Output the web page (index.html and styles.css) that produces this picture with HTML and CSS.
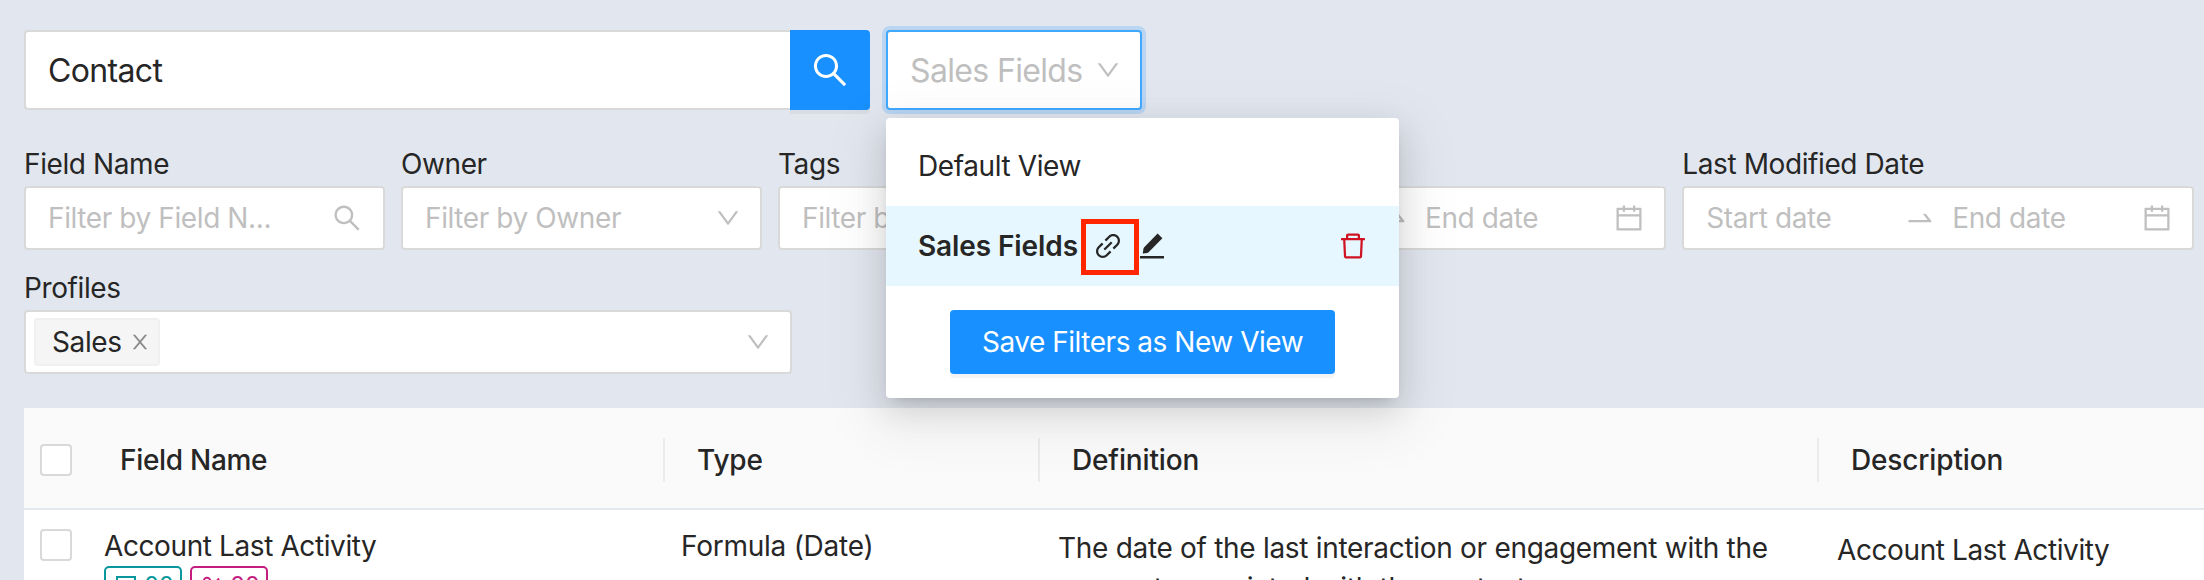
FILE: index.html
```
<!DOCTYPE html>
<html lang="en">
<head>
<meta charset="utf-8">
<title>Fields</title>
<link rel="stylesheet" href="styles.css">
</head>
<body>
<svg class="sprite" aria-hidden="true">
  <symbol id="search" viewBox="64 64 896 896"><path d="M909.6 854.5L649.9 594.8C690.2 542.7 712 479 712 412c0-80.200-31.300-155.400-87.900-212.100-56.600-56.700-132-87.900-212.100-87.900s-155.500 31.300-212.100 87.900C143.200 256.500 112 331.800 112 412c0 80.100 31.300 155.500 87.900 212.100C256.500 680.800 331.800 712 412 712c67 0 130.600-21.800 182.700-62l259.700 259.600a8.200 8.200 0 0 0 11.600 0l43.600-43.500a8.200 8.200 0 0 0 0-11.600zM570.400 570.400C528 612.700 471.800 636 412 636s-116-23.300-158.400-65.600C211.300 528 188 471.800 188 412s23.300-116.100 65.600-158.400C296 211.300 352.200 188 412 188s116.100 23.200 158.400 65.600S636 352.200 636 412s-23.300 116.100-65.600 158.400z"/></symbol>
  <symbol id="down" viewBox="64 64 896 896"><path d="M884 256h-75c-5.100 0-9.900 2.500-12.900 6.600L512 654.200 227.900 262.600c-3-4.100-7.800-6.600-12.900-6.600h-75c-6.500 0-10.300 7.400-6.500 12.700l352.600 486.100c12.800 17.600 39 17.600 51.700 0l352.600-486.100c3.900-5.300.1-12.700-6.400-12.700z"/></symbol>
  <symbol id="close" viewBox="64 64 896 896"><path d="M563.800 512l262.500-312.900c4.400-5.200.7-13.100-6.100-13.100h-79.800c-4.700 0-9.200 2.100-12.300 5.700L511.600 449.800 295.100 191.700c-3-3.600-7.500-5.700-12.300-5.700H203c-6.800 0-10.500 7.900-6.100 13.100L459.400 512 196.900 824.900A7.950 7.950 0 0 0 203 838h79.800c4.700 0 9.200-2.100 12.300-5.700l216.500-258.100 216.500 258.100c3 3.600 7.500 5.700 12.300 5.700h79.800c6.800 0 10.500-7.900 6.100-13.100L563.800 512z"/></symbol>
  <symbol id="calendar" viewBox="64 64 896 896"><path d="M880 184H712v-64c0-4.400-3.600-8-8-8h-56c-4.400 0-8 3.600-8 8v64H384v-64c0-4.400-3.600-8-8-8h-56c-4.400 0-8 3.600-8 8v64H144c-17.700 0-32 14.300-32 32v664c0 17.700 14.300 32 32 32h736c17.700 0 32-14.300 32-32V216c0-17.700-14.300-32-32-32zm-40 656H184V460h656v380zM184 392V256h128v48c0 4.400 3.600 8 8 8h56c4.400 0 8-3.600 8-8v-48h256v48c0 4.400 3.600 8 8 8h56c4.400 0 8-3.600 8-8v-48h128v136H184z"/></symbol>
  <symbol id="swap" viewBox="0 0 1024 1024"><path d="M873.1 596.2l-164-208A32 32 0 0 0 684 376h-64.800c-6.700 0-10.400 7.700-6.300 13l144.300 183H152c-4.400 0-8 3.600-8 8v60c0 4.400 3.600 8 8 8h695.900c26.800 0 41.700-30.800 25.200-51.800z"/></symbol>
  <symbol id="link" viewBox="64 64 896 896"><path d="M574 665.400a8.030 8.030 0 0 0-11.300 0L446.500 781.600c-53.800 53.800-144.600 59.500-204 0-59.500-59.500-53.800-150.200 0-204l116.200-116.200c3.100-3.100 3.100-8.200 0-11.300l-39.800-39.800a8.030 8.030 0 0 0-11.300 0L191.400 526.500c-84.600 84.600-84.600 221.500 0 306s221.500 84.600 306 0l116.200-116.200c3.100-3.100 3.100-8.200 0-11.300L574 665.400zm258.600-474c-84.600-84.600-221.500-84.600-306 0L410.300 307.600a8.030 8.030 0 0 0 0 11.300l39.700 39.700c3.100 3.100 8.200 3.100 11.300 0l116.200-116.200c53.800-53.800 144.600-59.500 204 0 59.500 59.500 53.800 150.200 0 204L665.300 562.600a8.030 8.030 0 0 0 0 11.300l39.800 39.800c3.100 3.100 8.200 3.100 11.300 0l116.200-116.200c84.500-84.600 84.500-221.500 0-306.100zM610.100 372.300a8.030 8.030 0 0 0-11.300 0L372.300 598.700a8.030 8.030 0 0 0 0 11.300l39.600 39.600c3.100 3.100 8.200 3.100 11.300 0l226.400-226.400c3.100-3.100 3.100-8.200 0-11.300l-39.500-39.600z"/></symbol>
  <symbol id="pen" viewBox="0 0 26 26"><path d="M18.600 .6L23.400 5.200 9.600 19.300Q8.900 20 8 20.100L4.300 20.600Q3.700 20.600 3.800 20L4.500 15.600Q4.600 14.900 5.200 14.300ZM1 23h24v2.400H1z"/></symbol>
  <symbol id="trash" viewBox="64 64 896 896"><path d="M360 184h-8c4.400 0 8-3.600 8-8v8h304v-8c0 4.400 3.600 8 8 8h-8v72h72v-80c0-35.300-28.700-64-64-64H352c-35.300 0-64 28.700-64 64v80h72v-72zm504 72H160c-17.700 0-32 14.300-32 32v32c0 4.400 3.600 8 8 8h60.400l24.700 523c1.600 34.100 29.800 61 63.900 61h454c34.200 0 62.300-26.800 63.900-61l24.700-523H888c4.400 0 8-3.600 8-8v-32c0-17.700-14.300-32-32-32zM731.300 840H292.700l-24.200-512h487l-24.200 512z"/></symbol>
</svg>

<main class="page">
  <div class="topbar">
    <div class="search">
      <div class="search-input"><span class="t-lg">Contact</span></div>
      <div class="search-btn"><svg class="ic36"><use href="#search"/></svg></div>
    </div>
    <div class="view-select">
      <span class="t-lg ph">Sales Fields</span><svg class="ic24"><use href="#down"/></svg>
      <div class="menu">
        <div class="item"><span>Default View</span></div>
        <div class="item active">
          <b class="item-name">Sales Fields</b>
          <span class="mark"><svg class="ic28"><use href="#link"/></svg></span>
          <svg class="ic26"><use href="#pen"/></svg>
          <svg class="ic28 trash"><use href="#trash"/></svg>
        </div>
        <div class="save"><span class="save-t">Save Filters as New View</span></div>
      </div>
    </div>
  </div>

  <div class="filters">
    <div class="field"><label>Field Name</label><div class="box find"><span class="ph">Filter by Field N...</span><svg class="ic28"><use href="#search"/></svg></div></div>
    <div class="field"><label>Owner</label><div class="box"><span class="ph">Filter by Owner</span><svg class="ic24"><use href="#down"/></svg></div></div>
    <div class="field"><label>Tags</label><div class="box"><span class="ph">Filter by Tags</span><svg class="ic24"><use href="#down"/></svg></div></div>
    <div class="field wide"><label>Created Date</label><div class="box range"><span class="ph">Start date</span><svg class="ic32 swap"><use href="#swap"/></svg><span class="ph">End date</span><svg class="ic28"><use href="#calendar"/></svg></div></div>
    <div class="field wide"><label>Last Modified Date</label><div class="box range"><span class="ph">Start date</span><svg class="ic32 swap"><use href="#swap"/></svg><span class="ph">End date</span><svg class="ic28"><use href="#calendar"/></svg></div></div>
  </div>

  <div class="profiles"><label>Profiles</label><div class="box multi"><span class="chip"><span>Sales</span><svg class="ic20"><use href="#close"/></svg></span><svg class="ic24"><use href="#down"/></svg></div></div>

  <div class="table">
    <div class="thead">
      <div class="c0"><i class="check"></i></div>
      <div class="c1">Field Name</div><div class="c2">Type</div><div class="c3">Definition</div><div class="c4">Description</div>
    </div>
    <div class="row">
      <div class="c0"><i class="check"></i></div>
      <div class="c1"><span>Account Last Activity</span>
        <div class="badges">
          <span class="badge teal"><svg class="bi" viewBox="0 0 20 20"><path d="M1 1h18v18H1zM5 6h2M13 6h2M5 13h10" fill="none" stroke="currentColor" stroke-width="2"/></svg>00</span>
          <span class="badge pink"><svg class="bi" viewBox="0 0 20 20"><g fill="none" stroke="currentColor" stroke-width="2"><circle cx="5" cy="5" r="3.200"/><circle cx="15" cy="15" r="3.200"/><path d="M17 2.500L3 18"/></g></svg>00</span>
        </div>
      </div>
      <div class="c2">Formula (Date)</div>
      <div class="c3">The date of the last interaction or engagement with the account associated with the contact.</div>
      <div class="c4">Account Last Activity</div>
    </div>
  </div>
</main>
</body>
</html>
```
FILE: styles.css
```
* { box-sizing: border-box; }
body { margin: 0; width: 2204px; height: 580px; overflow: hidden; background: #e2e6ee; color: #262626; font: 400 28px/44px Inter, "Liberation Sans", sans-serif; letter-spacing: -.4px; }
.sprite { display: none; }
svg { fill: currentColor; display: block; flex: none; }
span, b { white-space: nowrap; }
.page { height: 580px; overflow: hidden; padding: 30px 0 0 24px; display: flex; flex-direction: column; }
.t-lg { font-size: 32px; letter-spacing: -.65px; padding-top: 2px; }
.ph { color: #bfbfbf; }
.ic36 { width: 36px; height: 36px; }
.ic32 { width: 32px; height: 32px; }
.ic28 { width: 28px; height: 28px; }
.ic26 { width: 26px; height: 26px; }
.ic24 { width: 24px; height: 24px; }
.ic20 { width: 20px; height: 20px; }

.topbar { display: flex; gap: 16px; height: 80px; flex: none; }
.search { display: flex; width: 846px; }
.search-input { flex: 1; display: flex; align-items: center; padding-left: 22px; background: #fff; border: 2px solid #d9d9d9; border-right: 0; border-radius: 4px 0 0 4px; }
.search-btn { width: 80px; display: grid; place-items: center; color: #fff; background: #1890ff; border-radius: 0 4px 4px 0; box-shadow: 0 4px 0 rgba(0,0,0,.045); }
.view-select { position: relative; width: 256px; display: flex; align-items: center; justify-content: space-between; padding: 0 20px 0 22px; background: #fff; border: 2px solid #40a9ff; border-radius: 4px; box-shadow: 0 0 0 4px rgba(24,144,255,.2); }
.view-select > .ic24 { color: #bfbfbf; }

.menu { position: absolute; z-index: 5; left: -2px; top: 86px; width: 513px; height: 280px; padding-top: 8px; background: #fff; border-radius: 4px; box-shadow: 0 6px 12px -8px rgba(0,0,0,.24), 0 12px 32px rgba(0,0,0,.12), 0 18px 56px 16px rgba(0,0,0,.06); }
.item { height: 80px; display: flex; align-items: center; padding: 0 32px; }
.item.active { background: #e6f7ff; }
.item-name { width: 163px; font-weight: 600; letter-spacing: -.1px; }
.mark { width: 58px; height: 56px; padding: 0 4px 2px 0; border: 5px solid #ff2600; display: grid; place-items: center; position: relative; top: 1px; }
.trash { margin-left: auto; color: #cf1322; }
.save { width: 385px; height: 64px; margin: 24px auto 0; display: grid; place-items: center; color: #fff; background: #1890ff; border-radius: 4px; box-shadow: 0 4px 0 rgba(0,0,0,.045); letter-spacing: -.47px; }

.filters { display: flex; gap: 16px; margin-top: 32px; flex: none; }
.field { width: 361px; }
.field.wide { width: 511.300px; }
label { display: block; height: 44px; line-height: 44px; }
.box { height: 64px; display: flex; align-items: center; justify-content: space-between; padding: 0 20px 0 22px; color: #bfbfbf; background: #fff; border: 2px solid #d9d9d9; border-radius: 4px; }
.find { padding-right: 22px; }
.range { padding-right: 21px; }
.range > span { width: 198px; }
.swap { margin-right: 16px; }
.range > span:nth-of-type(2) { flex: 1; }
.profiles { width: 768px; margin-top: 16px; flex: none; }
.multi { padding-left: 8px; }
.chip { width: 126px; height: 48px; display: flex; align-items: center; justify-content: space-between; padding: 0 8px 0 16px; color: #262626; background: #f5f5f5; border: 2px solid #f0f0f0; border-radius: 4px; }
.chip svg { color: #8c8c8c; }

.table { margin-top: 34px; flex: none; background: #fff; }
.thead, .row { display: grid; grid-template-columns: 80px 561px 375px 779px 1fr; }
.thead { height: 102px; padding-top: 4px; align-items: center; background: #fafafa; border-bottom: 2px solid #e2e8ee; font-weight: 500; letter-spacing: -.15px; }
.thead > div { height: 44px; padding-left: 32px; border-right: 2px solid #ebebeb; }
.thead > .c0 { border-right: 0; padding: 6px 0 0 16px; }
.thead > .c1 { padding-left: 16px; letter-spacing: -.3px; }
.thead > .c4 { border-right: 0; }
.check { display: block; width: 32px; height: 32px; background: #fff; border: 2px solid #d9d9d9; border-radius: 4px; }
.row { height: 160px; }
.row > .c0 { padding: 19px 0 0 16px; }
.row > .c1, .row > .c2 { padding-top: 14px; }
.row > .c2 { padding-left: 16px; letter-spacing: -.25px; }
.row > .c3 { padding: 18px 40px 0 18px; line-height: 40px; letter-spacing: -.3px; }
.row > .c4 { padding: 18px 0 0 18px; }
.badges { display: flex; gap: 8px; margin-top: -2px; }
.badge { width: 78px; height: 40px; display: flex; align-items: center; gap: 8px; padding-left: 10px; border: 2px solid; border-radius: 5px; font-size: 24px; }
.bi { width: 20px; height: 20px; }
.teal { color: #08979c; }
.pink { color: #c41d7f; }
```
